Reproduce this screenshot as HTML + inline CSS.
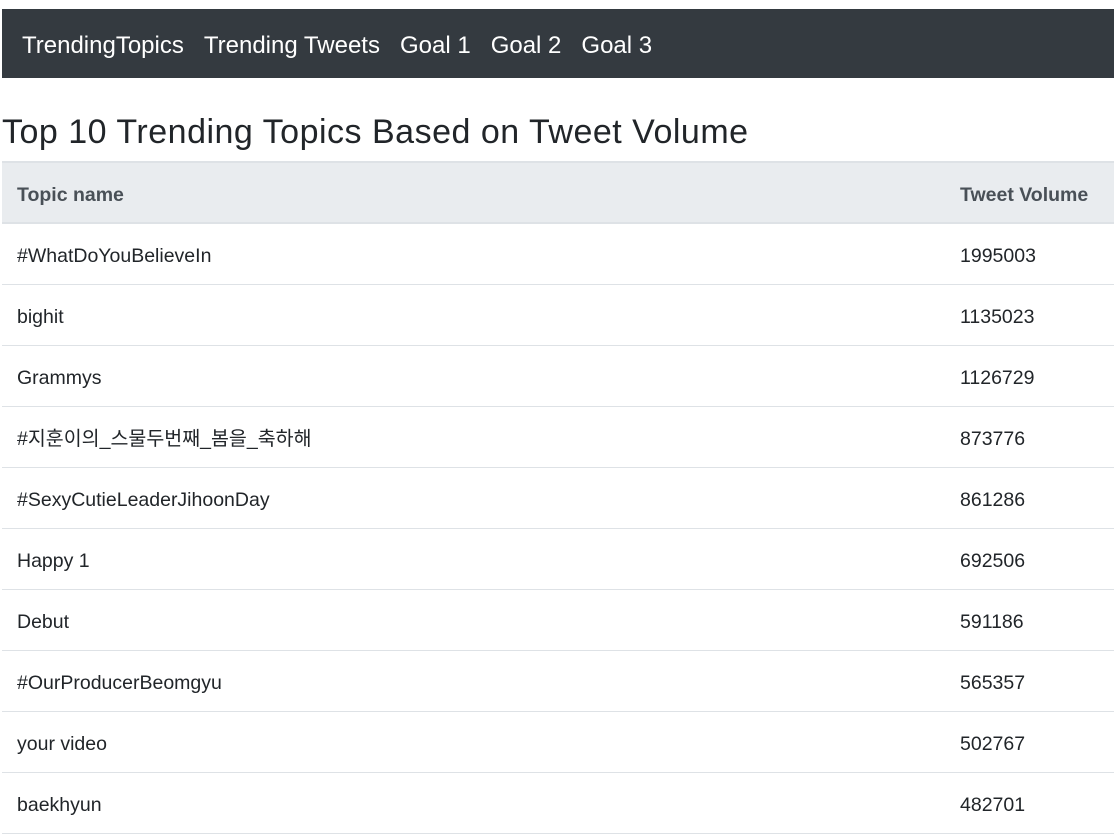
<!DOCTYPE html>
<html><head><meta charset="utf-8"><style>
body{margin:0;background:#fff;font-family:"Liberation Sans","Noto Sans CJK KR",sans-serif;color:#212529;overflow:hidden;}
.wrap{position:absolute;left:2px;top:0;width:1112px;}
nav{margin-top:9px;height:69px;background:#343a40;display:flex;align-items:center;padding-left:20px;padding-top:5px;box-sizing:border-box;}
nav span{color:#fff;font-size:24px;margin-right:20px;}
h1{font-size:34px;font-weight:500;margin:0;height:83px;line-height:108px;letter-spacing:0.5px;}
table{width:100%;border-collapse:collapse;font-size:19.5px;}
th{background:#e9ecef;color:#495057;text-align:left;font-weight:bold;height:55px;padding:4px 15px 0;border-top:2px solid #dee2e6;border-bottom:2px solid #dee2e6;white-space:nowrap;box-sizing:content-box;line-height:24px;}
td{height:56px;padding:4px 15px 0;border-bottom:1px solid #dee2e6;white-space:nowrap;box-sizing:content-box;line-height:24px;}
td:last-child,th:last-child{width:139px;}
</style></head><body><div class="wrap">
<nav><span>TrendingTopics</span><span>Trending Tweets</span><span>Goal 1</span><span>Goal 2</span><span>Goal 3</span></nav>
<h1>Top 10 Trending Topics Based on Tweet Volume</h1>
<table>
<tr><th>Topic name</th><th>Tweet Volume</th></tr>
<tr><td>#WhatDoYouBelieveIn</td><td>1995003</td></tr>
<tr><td>bighit</td><td>1135023</td></tr>
<tr><td>Grammys</td><td>1126729</td></tr>
<tr><td>#지훈이의_스물두번째_봄을_축하해</td><td>873776</td></tr>
<tr><td>#SexyCutieLeaderJihoonDay</td><td>861286</td></tr>
<tr><td>Happy 1</td><td>692506</td></tr>
<tr><td>Debut</td><td>591186</td></tr>
<tr><td>#OurProducerBeomgyu</td><td>565357</td></tr>
<tr><td>your video</td><td>502767</td></tr>
<tr><td>baekhyun</td><td>482701</td></tr>
</table>
</div></body></html>
